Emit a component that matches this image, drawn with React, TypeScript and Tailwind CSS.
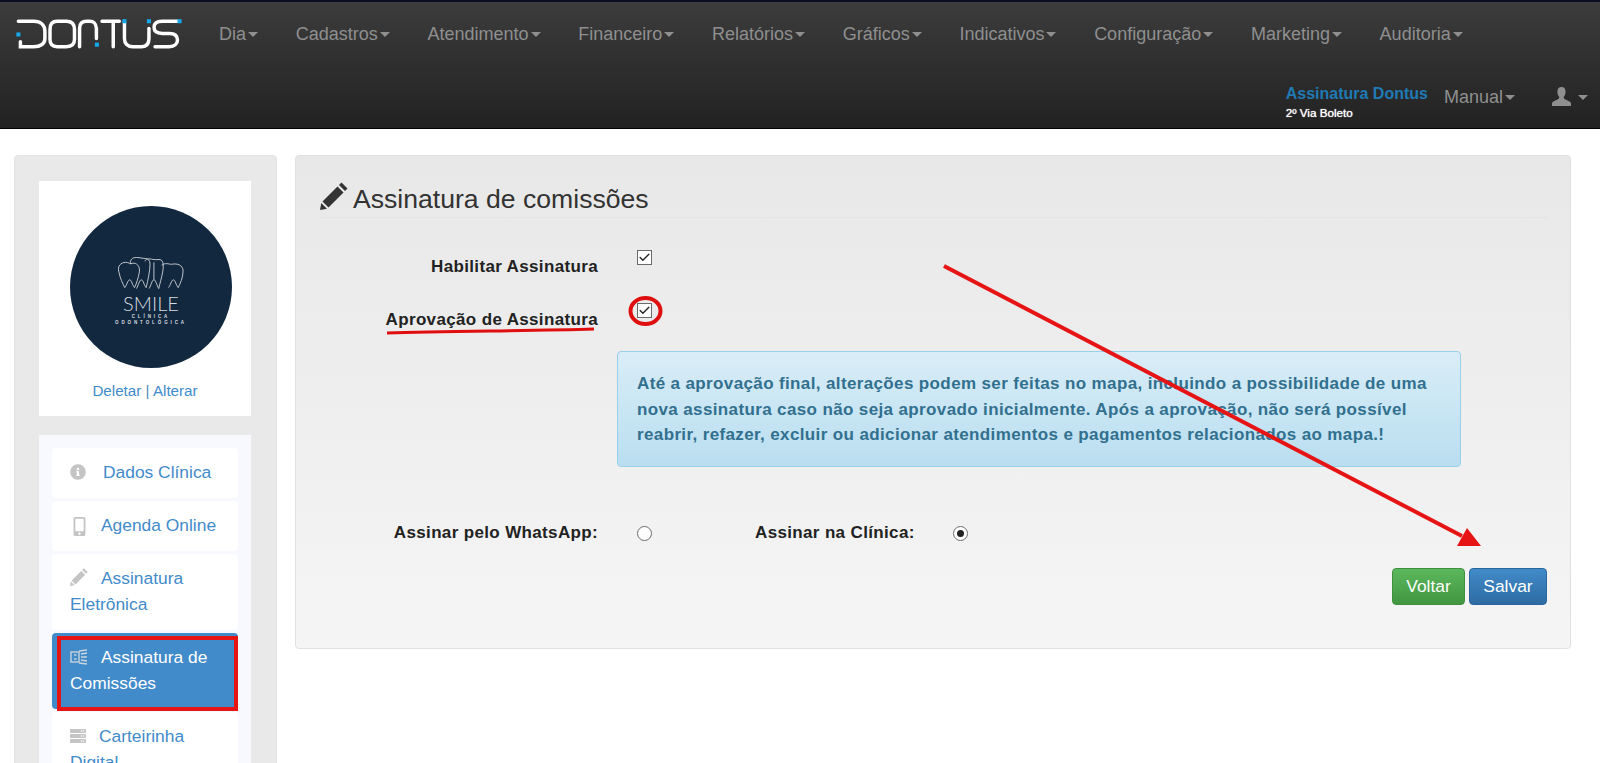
import { Check } from "lucide-react"
import { FaInfoCircle, FaMobileAlt, FaServer } from "react-icons/fa"

const navItems = [
  "Dia",
  "Cadastros",
  "Atendimento",
  "Financeiro",
  "Relatórios",
  "Gráficos",
  "Indicativos",
  "Configuração",
  "Marketing",
  "Auditoria",
]

const Caret = () => (
  <span className="inline-block h-0 w-0 border-x-[5px] border-t-[5px] border-x-transparent border-t-[#8f8f8f]" />
)

const NavItem = ({ label }: { label: string }) => (
  <span className="flex items-center gap-[2px] text-[18px] leading-none text-[#8f8f8f]">
    {label}
    <Caret />
  </span>
)

const Logo = () => (
  <svg width="184" height="51" viewBox="0 0 180 50" fill="none" className="shrink-0">
    <g stroke="#ffffff" strokeWidth="3.4" strokeLinecap="round">
      <path d="M9 11H24C31 11 35 15 35 21V28C35 33 31 36 24 36H11V31" />
      <path d="M47 11H56C62 11 64 14 64 19V29C64 33 62 36 56 36H47C42 36 40 33 40 29V19C40 14 42 11 47 11Z" />
      <path d="M69 36V18C69 13 72 11 76 11H79C84 11 85 14 85.5 18V28" />
      <path d="M91 11H108M102 11V36" />
      <path d="M113 11V28C113 33 116 36 121 36H130C135 36 137 33 137 28V18" />
      <path d="M165 11H150C145 11 142 13 142 17C142 21 145 23 150 23H157C163 23 165 26 165 29.5C165 33 162 36 157 36H143" />
    </g>
    <g fill="#16a8e8">
      <rect x="7" y="22" width="4" height="4" />
      <rect x="84" y="32" width="4" height="4" />
      <rect x="111" y="9" width="4" height="4" />
      <rect x="135" y="9" width="4" height="4" />
      <rect x="165" y="9" width="4" height="4" />
    </g>
  </svg>
)

const UserIcon = () => (
  <svg width="19" height="19" viewBox="0 0 19 19" fill="#8f8f8f">
    <path d="M9.5 0C6.8 0 5.4 2 5.4 4.8C5.4 7 6.2 8.8 7.3 10C7.5 11.3 6.6 12 5 12.7C2.8 13.6 0.6 14.4 0 16.2V19H19V16.2C18.4 14.4 16.2 13.6 14 12.7C12.4 12 11.5 11.3 11.7 10C12.8 8.8 13.6 7 13.6 4.8C13.6 2 12.2 0 9.5 0Z" />
  </svg>
)

const PencilIcon = ({ size, className }: { size: number; className?: string }) => (
  <svg width={size} height={size} viewBox="0 0 28 28" fill="currentColor" className={className}>
    <path d="M21.5 0.5L27.5 6.5L25 9L19 3Z" />
    <path d="M17.5 4.5L23.5 10.5L8.5 25.5L2.5 19.5Z" />
    <path d="M1.3 21L7 26.7L0 28Z" />
  </svg>
)

const Navbar = () => (
  <header className="flex h-[129px] flex-col border-t-2 border-b border-t-[#0b1020] border-b-black bg-gradient-to-b from-[#3c3c3c] to-[#222222]">
    <div className="flex items-start pt-[8px] pl-[9px]">
      <Logo />
      <nav className="mt-[15px] ml-[26px] flex gap-[37.7px]">
        {navItems.map((item) => (
          <NavItem key={item} label={item} />
        ))}
      </nav>
    </div>
    <div className="mt-[23px] flex items-center justify-end pr-[12px]">
      <div className="mr-[16px] flex flex-col">
        <span className="text-[16px] leading-[20px] font-bold text-[#1f7ab5]">Assinatura Dontus</span>
        <span className="mt-[2px] text-[11.7px] leading-[14px] text-white [text-shadow:0_0_1px_#ffffff]">2º Via Boleto</span>
      </div>
      <span className="mb-[10px]">
        <NavItem label="Manual" />
      </span>
      <span className="mr-[7px] mb-[12px] ml-[37px]">
        <UserIcon />
      </span>
      <span className="mb-[10px] flex">
        <Caret />
      </span>
    </div>
  </header>
)

const ClinicLogo = () => (
  <div className="ml-[12px] flex h-[162px] w-[162px] shrink-0 flex-col items-center rounded-full bg-[#12283f] pt-[50px] text-[#d8dce0]">
    <svg width="68" height="36" viewBox="0 0 70 36" fill="none" stroke="#d5d9dd" strokeWidth="0.9">
      <path d="M2 16C0 10 4 6 9 6C12 6 13 8 16 7C20 6 24 10 23 16C22 22 20 28 18 32C16 30 15 24 13 24C11 24 10 30 8 32C6 28 3 22 2 16Z" />
      <path d="M14 8C13 3 16 1 20 1C24 1 26 2 29 2C32 2 34 4 34 8C34 14 32 24 30 32C28 30 27 24 25 24C23 24 22 30 20 33" />
      <path d="M29 5C29 2 33 2 37 3C41 4 44 2 46 4C48 6 48 10 47 16C46 22 44 28 43 33C41 30 40 24 38 24C36 24 35 30 33 33" />
      <path d="M46 9C50 6 53 8 56 8C61 7 68 8 68 15C68 22 65 28 63 32C61 30 60 24 58 24C56 24 55 30 53 32" />
      <path d="M38 6V24" />
    </svg>
    <span className="mt-[1px] font-['Lato',sans-serif] text-[20px] leading-[20px] font-light">SMILE</span>
    <span className="mt-[1px] text-[4.5px] leading-[6px] font-bold tracking-[2.9px]">CLÍNICA</span>
    <span className="text-[4.5px] leading-[6px] font-bold tracking-[2.9px]">ODONTOLÓGICA</span>
  </div>
)

const CommissionIcon = () => (
  <svg width="18" height="16" viewBox="0 0 18 16" fill="none" stroke="#c9d3dc" strokeWidth="1.4">
    <rect x="1" y="3" width="8" height="10" />
    <path d="M4 6H6.5M4 10H6.5M9 2L17 1M9 14L17 15M11 5L17 4M11 8H17M11 11L17 12" />
  </svg>
)

type SideItemProps = {
  icon: React.ReactNode
  active?: boolean
  children: React.ReactNode
}

const SideItem = ({ icon, active, children }: SideItemProps) => (
  <div
    className={`relative rounded-[4px] px-[18px] pt-[11px] pb-[13px] text-[17.4px] leading-[26px] ${
      active ? "bg-[#428bca] text-white" : "bg-white text-[#428bca]"
    }`}
  >
    <span className="inline-block h-[16px] align-[-2px] leading-none text-[#c4c4c4]">{icon}</span>
    {children}
    {active && (
      <span className="absolute top-[3px] right-0 -bottom-[2px] left-[5px] border-[4px] border-[#e61414]" />
    )}
  </div>
)

const Sidebar = () => (
  <aside className="flex w-[263px] shrink-0 flex-col rounded-t-[4px] border border-[#e3e3e3] bg-[#e9e9e9] pt-[25px] pr-[25px] pb-[40px] pl-[24px]">
    <div className="flex h-[235px] shrink-0 flex-col items-center bg-white pt-[25px]">
      <ClinicLogo />
      <a className="mt-[14px] text-[15.2px] leading-[18px] text-[#428bca]">Deletar | Alterar</a>
    </div>
    <div className="mt-[19px] flex flex-col gap-[3px] bg-[#f8f9ff] px-[13px] pt-[13px] pb-[20px]">
      <SideItem icon={<FaInfoCircle className="mr-[17px] text-[16px]" />}>Dados Clínica</SideItem>
      <SideItem icon={<FaMobileAlt className="mr-[12px] text-[19px]" />}>Agenda Online</SideItem>
      <SideItem icon={<PencilIcon size={18} className="mr-[13px] -mt-[2px]" />}>Assinatura Eletrônica</SideItem>
      <SideItem
        active
        icon={
          <span className="mr-[13px] block">
            <CommissionIcon />
          </span>
        }
      >
        Assinatura de Comissões
      </SideItem>
      <SideItem icon={<FaServer className="mr-[13px] text-[16px]" />}>Carteirinha Digital</SideItem>
    </div>
  </aside>
)

const Checkbox = () => (
  <span className="flex h-[15px] w-[15px] items-center justify-center border border-[#6b6b6b] bg-white">
    <Check size={13} strokeWidth={2.5} className="text-[#222]" />
  </span>
)

const Radio = ({ checked }: { checked?: boolean }) => (
  <span className="flex h-[15px] w-[15px] items-center justify-center rounded-full border border-[#6b6b6b] bg-white">
    {checked && <span className="h-[7px] w-[7px] rounded-full bg-[#222]" />}
  </span>
)

const labelClass = "text-[17px] leading-[20px] font-bold tracking-[0.35px] whitespace-nowrap text-[#222]"

const Content = () => (
  <main className="flex h-[494px] flex-1 flex-col rounded-[4px] border border-[#e0e0e0] bg-gradient-to-b from-[#e8e8e8] to-[#f5f5f5] pr-[23px] pl-[24px]">
    <div className="mt-[25px] flex h-[37px] items-center gap-[5px] border-b border-[#e4e4e4] pb-[1px] text-[#333]">
      <PencilIcon size={28} className="mb-[6px]" />
      <h1 className="text-[26.6px] leading-[36px] font-normal">Assinatura de comissões</h1>
    </div>

    <div className="mt-[32px] flex h-[32px] items-start">
      <span className={`${labelClass} mt-[7px] w-[278px] text-right`}>Habilitar Assinatura</span>
      <span className="ml-[39px]">
        <Checkbox />
      </span>
    </div>
    <div className="mt-[21px] flex h-[32px] items-start">
      <span className={`${labelClass} mt-[7px] w-[278px] text-right`}>Aprovação de Assinatura</span>
      <span className="ml-[39px]">
        <Checkbox />
      </span>
    </div>

    <div className="mt-[16px] ml-[297px] h-[116px] w-[844px] rounded-[4px] border border-[#9acfea] bg-gradient-to-b from-[#d9edf7] to-[#b9def0] px-[19px] pt-[19px] text-[17px] leading-[25.5px] font-bold tracking-[0.37px] whitespace-nowrap text-[#31708f]">
      Até a aprovação final, alterações podem ser feitas no mapa, incluindo a possibilidade de uma
      <br />
      nova assinatura caso não seja aprovado inicialmente. Após a aprovação, não será possível
      <br />
      reabrir, refazer, excluir ou adicionar atendimentos e pagamentos relacionados ao mapa.!
    </div>

    <div className="mt-[56px] flex h-[20px] items-center">
      <span className={`${labelClass} w-[278px] text-right`}>Assinar pelo WhatsApp:</span>
      <span className="ml-[39px]">
        <Radio />
      </span>
      <span className={`${labelClass} ml-[103px] w-[159px]`}>Assinar na Clínica:</span>
      <span className="ml-[39px]">
        <Radio checked />
      </span>
    </div>

    <div className="mt-[25px] flex justify-end gap-[4px]">
      <button className="h-[37px] w-[73px] rounded-[4px] border border-[#3e8f3e] bg-gradient-to-b from-[#5cb85c] to-[#419641] text-[17.4px] text-white">
        Voltar
      </button>
      <button className="h-[37px] w-[78px] rounded-[4px] border border-[#2b669a] bg-gradient-to-b from-[#428bca] to-[#2d6ca2] text-[17.4px] text-white">
        Salvar
      </button>
    </div>
  </main>
)

const Annotations = () => (
  <svg className="pointer-events-none absolute inset-0 h-full w-full" viewBox="0 0 1600 763" fill="none">
    <path d="M387 333C450 331 530 331 594 329" stroke="#e00f0f" strokeWidth="3" />
    <ellipse cx="645.5" cy="311" rx="15" ry="13" stroke="#e00f0f" strokeWidth="4" />
    <path d="M944 266L1462 536" stroke="#e61414" strokeWidth="4" />
    <path d="M1467 528L1457 546H1481Z" fill="#e61414" />
  </svg>
)

export default function App() {
  return (
    <div className="relative h-screen overflow-hidden bg-white font-['Liberation_Sans',Arial,sans-serif]">
      <Navbar />
      <div className="flex items-start gap-[18px] pt-[26px] pr-[29px] pl-[14px]">
        <Sidebar />
        <Content />
      </div>
      <Annotations />
    </div>
  )
}
